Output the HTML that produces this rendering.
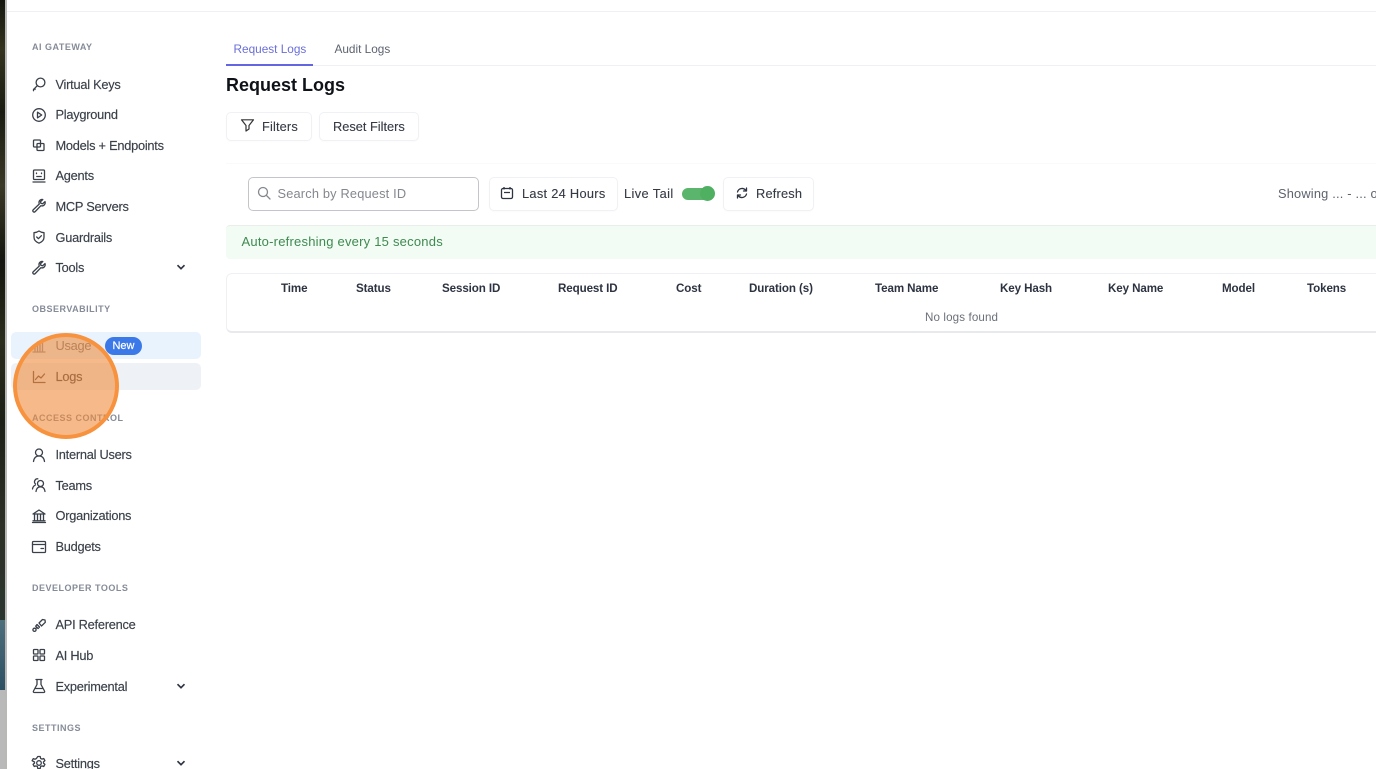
<!DOCTYPE html>
<html><head><meta charset="utf-8"><style>
*{box-sizing:border-box}
html,body{margin:0;padding:0;width:1376px;height:769px;overflow:hidden;background:#fff;font-family:"Liberation Sans",sans-serif;color:#2d3340}
#p{position:relative;width:1376px;height:769px;overflow:hidden;filter:blur(.35px)}
.a{position:absolute;white-space:nowrap}
.n{font-size:12.8px;left:55.5px;color:#3a4049;letter-spacing:-.25px;line-height:16px;-webkit-text-stroke:.15px #3a4049}
.h{font-size:9px;left:32px;color:#858b97;font-weight:bold;letter-spacing:.5px;line-height:12px}
.i{position:absolute;left:31px;width:16px;height:16px;fill:none;stroke:#3a4049;stroke-width:1.3;stroke-linecap:round;stroke-linejoin:round}
.c{position:absolute;left:176px;width:10px;height:10px;fill:none;stroke:#2d3340;stroke-width:1.7}
.b{position:absolute;border:1px solid #f0f1f4;border-radius:5px;background:#fff;box-shadow:0 1px 1px rgba(0,0,0,.02)}
.t{font-size:12.8px;color:#353a45;letter-spacing:.15px;line-height:16px;-webkit-text-stroke:.12px #353a45}
.th{font-size:11.6px;font-weight:bold;color:#2d3340;top:281px;line-height:15px;letter-spacing:-.1px}
</style></head><body><div id="p">
<div class="a" style="left:0;top:0;width:5px;height:620px;background:linear-gradient(180deg,#15170f 0,#34331f 8%,#1a1c12 18%,#3a3826 30%,#14160f 42%,#2a2c1c 55%,#1c2016 68%,#2c3026 85%,#2b3530 100%)"></div>
<div class="a" style="left:0;top:620px;width:5px;height:70px;background:linear-gradient(180deg,#4e6f7c,#2c4f62)"></div>
<div class="a" style="left:0;top:690px;width:5px;height:79px;background:#b9b9b9"></div>
<div class="a" style="left:5px;top:0;width:2px;height:769px;background:#b8b8b6"></div>
<div class="a" style="left:7px;top:11px;width:1369px;height:1px;background:#eef0f3"></div>

<div class="a h" style="top:41px">AI GATEWAY</div>
<div class="a n" style="top:76.5px">Virtual Keys</div>
<div class="a n" style="top:107px">Playground</div>
<div class="a n" style="top:137.5px">Models + Endpoints</div>
<div class="a n" style="top:168px">Agents</div>
<div class="a n" style="top:198.5px">MCP Servers</div>
<div class="a n" style="top:229.5px">Guardrails</div>
<div class="a n" style="top:260px">Tools</div>
<div class="a h" style="top:303px">OBSERVABILITY</div>
<div class="a" style="left:11px;top:332px;width:190px;height:27px;background:#e9f3fe;border-radius:5px"></div>
<div class="a" style="left:11px;top:363px;width:190px;height:27px;background:#eef2f7;border-radius:5px"></div>
<div class="a n" style="top:338px;color:#6b7280;-webkit-text-stroke:0">Usage</div>
<div class="a" style="left:105px;top:337px;width:37px;height:18px;border-radius:9px;background:#3b78e8;color:#fff;font-size:11px;font-weight:normal;-webkit-text-stroke:.2px #fff;text-align:center;line-height:18px">New</div>
<div class="a n" style="top:369px">Logs</div>
<div class="a h" style="top:412px">ACCESS CONTROL</div>
<div class="a n" style="top:447px">Internal Users</div>
<div class="a n" style="top:477.5px">Teams</div>
<div class="a n" style="top:508px">Organizations</div>
<div class="a n" style="top:539px">Budgets</div>
<div class="a h" style="top:582px">DEVELOPER TOOLS</div>
<div class="a n" style="top:617px">API Reference</div>
<div class="a n" style="top:647.5px">AI Hub</div>
<div class="a n" style="top:678.5px">Experimental</div>
<div class="a h" style="top:722px">SETTINGS</div>
<div class="a n" style="top:756px">Settings</div>

<svg class="i" style="top:76px" viewBox="0 0 16 16"><circle cx="9.5" cy="6.5" r="4.4"/><path d="M6.4 9.6L2.5 13.5M2.5 13.5v1.2M4 12v1.5"/></svg>
<svg class="i" style="top:106.5px" viewBox="0 0 16 16"><circle cx="8" cy="8" r="6.3"/><path d="M6.5 5.2v5.600L10.700 8z"/></svg>
<svg class="i" style="top:137px" viewBox="0 0 16 16"><rect x="2.500" y="3" width="7" height="7" rx="1"/><rect x="6" y="6.500" width="7" height="7" rx="1"/></svg>
<svg class="i" style="top:167px" viewBox="0 0 16 16"><rect x="2.500" y="3" width="11" height="9.500" rx="1"/><path d="M2 15h12M5.500 6v.6M10.500 6v.6M5.800 9.500h4.400"/></svg>
<svg class="i" style="top:198px" viewBox="0 0 16 16"><path d="M14 3.600l-2.400 2.200-1.700-.4-.4-1.700L11.800 1.500C9.800 1 7.800 2.500 8 4.800c0 .5.1.9.3 1.200L2.400 11.600c-.8.8-.8 1.500-.2 2.100s1.400.5 2.100-.2l5.600-5.800c2.500.9 5-1.400 4.100-4.100z"/></svg>
<svg class="i" style="top:229px" viewBox="0 0 16 16"><path d="M8 2c1.700 1.200 3.300 1.600 5 1.700v4.600c0 3-2.200 4.800-5 5.900-2.800-1.100-5-2.900-5-5.900V3.700C4.700 3.600 6.300 3.200 8 2z"/><path d="M5.700 8l1.700 1.700 3-3"/></svg>
<svg class="i" style="top:260px" viewBox="0 0 16 16"><path d="M14 3.600l-2.400 2.200-1.700-.4-.4-1.700L11.800 1.500C9.800 1 7.800 2.500 8 4.800c0 .5.1.9.3 1.200L2.400 11.600c-.8.8-.8 1.500-.2 2.100s1.400.5 2.100-.2l5.600-5.800c2.500.9 5-1.400 4.100-4.100z"/></svg>
<svg class="c" style="top:262px" viewBox="0 0 10 10"><path d="M1.500 3.200L5 6.700l3.500-3.500"/></svg>
<svg class="i" style="top:338px;stroke:#8d8f93" viewBox="0 0 16 16"><path d="M2 14h12M4 13V8M6.500 13V4M9 13V6M11.500 13V3"/></svg>
<svg class="i" style="top:369px;stroke:#5a4a40" viewBox="0 0 16 16"><path d="M2.500 2.500v11h11.500M4.500 10.500l3-3.500 2.500 2 3.500-4"/></svg>
<svg class="i" style="top:446.5px" viewBox="0 0 16 16"><circle cx="8" cy="5.500" r="3.500"/><path d="M2.500 14.500c.5-3.500 2.500-5.500 5.500-5.500s5 2 5.500 5.500"/></svg>
<svg class="i" style="top:477px" viewBox="0 0 16 16"><circle cx="9.500" cy="6.500" r="3"/><path d="M5 14.500c.4-3 2-4.700 4.500-4.700s4.100 1.700 4.500 4.700M6.800 1.800a3 3 0 0 0-2.300 5.200M1.500 12c.3-1.800 1.200-3.200 2.700-3.800"/></svg>
<svg class="i" style="top:507.5px" viewBox="0 0 16 16"><path d="M2 6l6-4 6 4zM3.500 6.500v6M6.500 6.500v6M9.500 6.500v6M12.500 6.500v6M2 12.800h12M1.500 14.500h13"/></svg>
<svg class="i" style="top:538.5px" viewBox="0 0 16 16"><rect x="1.500" y="2.500" width="13" height="11" rx="1"/><path d="M1.500 5.500h13M10 9.500h2.500"/></svg>
<svg class="i" style="top:617px" viewBox="0 0 16 16"><path d="M8 6l3.500-3.500 2.500.5.300 2.300L10.500 9zM6 7.500L8.500 10 7 11.500 4.700 9.200z"/><circle cx="3.500" cy="12.800" r="1.600"/><path d="M4.700 11.600l1.300-1.300"/></svg>
<svg class="i" style="top:647px" viewBox="0 0 16 16"><rect x="2.500" y="2.500" width="4.500" height="4.500" rx=".6"/><rect x="9" y="2.500" width="4.500" height="4.500" rx=".6"/><rect x="2.500" y="9" width="4.500" height="4.500" rx=".6"/><rect x="9" y="9" width="4.500" height="4.500" rx=".6"/></svg>
<svg class="i" style="top:678px" viewBox="0 0 16 16"><path d="M5 1.500h6M6 1.500v5L2.500 13c-.5 1 0 1.500 1 1.500h9c1 0 1.500-.5 1-1.500L10 6.500v-5M4 10.500h8"/></svg>
<svg class="c" style="top:681px" viewBox="0 0 10 10"><path d="M1.500 3.200L5 6.700l3.500-3.500"/></svg>
<svg class="i" style="top:755px" viewBox="0 0 16 16"><circle cx="8" cy="8" r="2.300"/><path d="M6.800 1.500h2.400l.4 1.900 1.300.7 1.800-.6 1.200 2.100-1.400 1.300v1.200l1.400 1.300-1.200 2.100-1.800-.6-1.300.7-.4 1.900H6.800l-.4-1.900-1.300-.7-1.800.6-1.200-2.100 1.400-1.300V7.000L1.100 5.700l1.200-2.100 1.800.6 1.300-.7z"/></svg>
<svg class="c" style="top:758px" viewBox="0 0 10 10"><path d="M1.500 3.200L5 6.700l3.500-3.500"/></svg>

<div class="a" style="left:13px;top:333px;width:106px;height:106px;border-radius:50%;background:rgba(240,140,60,.6);border:4px solid #f7933e"></div>

<div class="a" style="left:226px;top:65px;width:1150px;height:1px;background:#eff0f3"></div>
<div class="a" style="left:226px;top:64px;width:87px;height:2px;background:#6366e0"></div>
<div class="a" style="left:233.500px;top:41px;font-size:11.800px;color:#6a6fd8;line-height:16px">Request Logs</div>
<div class="a" style="left:334.500px;top:41px;font-size:11.800px;color:#5d6370;line-height:16px">Audit Logs</div>
<div class="a" style="left:226px;top:74px;font-size:18px;font-weight:bold;color:#0f1218;line-height:22px">Request Logs</div>

<div class="b" style="left:226px;top:112px;width:86px;height:29px"></div>
<svg class="a" style="left:240px;top:118px;width:15px;height:15px;fill:none;stroke:#333;stroke-width:1.200;stroke-linejoin:round" viewBox="0 0 15 15"><path d="M1.500 1.800h12L9 7.500v3.500L6 13V7.500z"/></svg>
<div class="a t" style="left:262px;top:119px">Filters</div>
<div class="b" style="left:319px;top:112px;width:100px;height:29px"></div>
<div class="a t" style="left:333px;top:119px;letter-spacing:0">Reset Filters</div>

<div class="a" style="left:226px;top:163px;width:1150px;height:1px;background:#fafafb"></div>
<div class="a" style="left:248px;top:177px;width:231px;height:34px;border:1px solid #c3c5ca;border-radius:5px;background:#fff"></div>
<svg class="a" style="left:257px;top:186px;width:14px;height:14px;fill:none;stroke:#85888f;stroke-width:1.300;stroke-linecap:round" viewBox="0 0 14 14"><circle cx="6" cy="6" r="4.500"/><path d="M9.500 9.500L13 13"/></svg>
<div class="a t" style="left:277.500px;top:186px;color:#84878e;letter-spacing:.18px;-webkit-text-stroke:0">Search by Request ID</div>
<div class="b" style="left:489px;top:177px;width:129px;height:34px"></div>
<svg class="a" style="left:500px;top:186px;width:14px;height:14px;fill:none;stroke:#2d3340;stroke-width:1.300" viewBox="0 0 14 14"><rect x="1.500" y="2.500" width="11" height="10" rx="1.500"/><path d="M4 1v2.500M10 1v2.500M4 6.500h6"/></svg>
<div class="a t" style="left:522px;top:186px;letter-spacing:.3px">Last 24 Hours</div>
<div class="a t" style="left:624px;top:186px;letter-spacing:.4px">Live Tail</div>
<div class="a" style="left:682px;top:188px;width:30px;height:12px;border-radius:6px;background:#5cb56c"></div>
<div class="a" style="left:700px;top:186px;width:15px;height:15px;border-radius:50%;background:#4fb062"></div>
<div class="b" style="left:723px;top:177px;width:91px;height:34px"></div>
<svg class="a" style="left:735px;top:186px;width:14px;height:14px;fill:none;stroke:#2d3340;stroke-width:1.300;stroke-linecap:round;stroke-linejoin:round" viewBox="0 0 14 14"><path d="M2.500 6a4.700 4.700 0 0 1 8-2l1 1M11.500 2v3h-3M11.500 8a4.700 4.700 0 0 1-8 2l-1-1M2.500 12V9h3"/></svg>
<div class="a t" style="left:756px;top:186px;letter-spacing:.2px">Refresh</div>
<div class="a t" style="left:1278px;top:186px;color:#5d626c;letter-spacing:.2px;-webkit-text-stroke:0">Showing ... - ... of</div>

<div class="a" style="left:226px;top:225px;width:1150px;height:34px;background:#f2fbf4;border-top:1px solid #e9eeea;border-radius:4px 0 0 4px"></div>
<div class="a" style="left:241.500px;top:234px;font-size:13px;color:#3f8a50;line-height:16px;letter-spacing:.22px">Auto-refreshing every 15 seconds</div>

<div class="a" style="left:226px;top:273px;width:1160px;height:60px;border:1px solid #eef0f4;border-bottom:2px solid #e8e9ec;border-radius:6px;background:#fff"></div>
<div class="a th" style="left:281px">Time</div>
<div class="a th" style="left:356px">Status</div>
<div class="a th" style="left:442px">Session ID</div>
<div class="a th" style="left:558px">Request ID</div>
<div class="a th" style="left:676px">Cost</div>
<div class="a th" style="left:749px">Duration (s)</div>
<div class="a th" style="left:875px">Team Name</div>
<div class="a th" style="left:1000px">Key Hash</div>
<div class="a th" style="left:1108px">Key Name</div>
<div class="a th" style="left:1222px">Model</div>
<div class="a th" style="left:1307px">Tokens</div>
<div class="a" style="left:925px;top:310px;font-size:11.600px;color:#6b7079;line-height:15px;letter-spacing:.12px">No logs found</div>
</div></body></html>
